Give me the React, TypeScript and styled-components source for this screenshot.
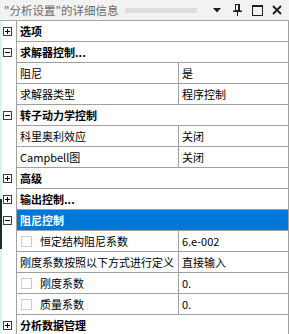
import React from "react";
import styled, { createGlobalStyle } from "styled-components";

const GlobalStyle = createGlobalStyle`
  html, body { margin: 0; padding: 0; background: #ffffff; }
  body { font-family: "Noto Sans CJK SC", "Noto Sans", sans-serif; font-size: 11px; color: #000; }
`;

const Panel = styled.div`
  width: 289px;
  height: 334px;
  overflow: hidden;
  display: flex;
  flex-direction: column;
  background: #ffffff;
`;

const TitleBar = styled.div`
  height: 20px;
  flex: none;
  display: flex;
  align-items: center;
  padding: 0 6px 0 4px;
  background: #f2f2f2;
  border-bottom: 1px solid #a8a8a8;
  gap: 5px;
`;

const Title = styled.span`
  color: #6a6a6a;
  font-size: 11.5px;
  white-space: nowrap;
  line-height: 20px;
`;

const Grip = styled.div`
  flex: 1;
  height: 5px;
  margin: 0 6px 0 2px;
  background-image: radial-gradient(circle, #c4c4c4 0.6px, transparent 0.8px);
  background-size: 2px 2px;
`;

const IconButton = styled.span`
  display: flex;
  align-items: center;
  justify-content: center;
  width: 12px;
  height: 14px;
  margin-left: 3px;
`;

const Body = styled.div`
  flex: 1;
  display: flex;
  min-height: 0;
`;

const EdgeStrip = styled.div`
  width: 2px;
  flex: none;
  background: linear-gradient(
    to bottom,
    #d6f6f0 0px,
    #d6f6f0 178px,
    #1f2a2a 178px,
    #1f2a2a 228px,
    #d6f6f0 228px
  );
`;

const Rows = styled.div`
  flex: 1;
  display: flex;
  flex-direction: column;
`;

const Row = styled.div`
  display: flex;
  height: 21px;
  flex: none;
`;

const Gutter = styled.div`
  width: 14px;
  flex: none;
  display: flex;
  align-items: center;
  padding-left: 1px;
  box-sizing: border-box;
`;

const Expander = styled.span`
  width: 9px;
  height: 9px;
  box-sizing: border-box;
  border: 1px solid #3c3c3c;
  display: flex;
  align-items: center;
  justify-content: center;
  background: #fff;
`;

const Content = styled.div<{ $selected?: boolean }>`
  flex: 1;
  display: flex;
  border-left: 1px solid #a0a0a0;
  border-right: 1px solid #a0a0a0;
  border-bottom: 1px solid #a0a0a0;
  background: ${(p) => (p.$selected ? "#0078d7" : "#ffffff")};
  color: ${(p) => (p.$selected ? "#ffffff" : "#000000")};
`;

const GroupLabel = styled.div`
  flex: 1;
  padding-left: 3px;
  font-weight: bold;
  line-height: 20px;
  white-space: nowrap;
`;

const NameCell = styled.div`
  width: 161px;
  flex: none;
  display: flex;
  align-items: center;
  padding-left: 3px;
  box-sizing: border-box;
  white-space: nowrap;
  overflow: hidden;
  line-height: 20px;
`;

const ValueCell = styled.div`
  flex: 1;
  border-left: 1px solid #a0a0a0;
  padding-left: 3px;
  line-height: 20px;
  white-space: nowrap;
`;

const Check = styled.span`
  width: 11px;
  height: 11px;
  box-sizing: border-box;
  border: 1px solid #cccccc;
  background: #fff;
  margin-left: 1px;
  margin-right: 8px;
  flex: none;
`;

const Sign = ({ open }: { open: boolean }) => (
  <svg width="5" height="5" viewBox="0 0 5 5">
    <rect x="0" y="2" width="5" height="1" fill="#000" />
    {!open && <rect x="2" y="0" width="1" height="5" fill="#000" />}
  </svg>
);

type Item =
  | { kind: "group"; label: string; open: boolean; selected?: boolean }
  | { kind: "prop"; label: string; value: string; check?: boolean };

const items: Item[] = [
  { kind: "group", label: "选项", open: false },
  { kind: "group", label: "求解器控制...", open: true },
  { kind: "prop", label: "阻尼", value: "是" },
  { kind: "prop", label: "求解器类型", value: "程序控制" },
  { kind: "group", label: "转子动力学控制", open: true },
  { kind: "prop", label: "科里奥利效应", value: "关闭" },
  { kind: "prop", label: "Campbell图", value: "关闭" },
  { kind: "group", label: "高级", open: false },
  { kind: "group", label: "输出控制...", open: false },
  { kind: "group", label: "阻尼控制", open: true, selected: true },
  { kind: "prop", label: "恒定结构阻尼系数", value: "6.e-002", check: true },
  { kind: "prop", label: "刚度系数按照以下方式进行定义", value: "直接输入" },
  { kind: "prop", label: "刚度系数", value: "0.", check: true },
  { kind: "prop", label: "质量系数", value: "0.", check: true },
  { kind: "group", label: "分析数据管理", open: false },
];

export default function App() {
  return (
    <>
      <GlobalStyle />
      <Panel>
        <TitleBar>
          <Title>"分析设置"的详细信息</Title>
          <Grip />
          <IconButton>
            <svg width="8" height="5" viewBox="0 0 8 5">
              <polygon points="0,0 8,0 4,4.5" fill="#1e1e1e" />
            </svg>
          </IconButton>
          <IconButton>
            <svg width="9" height="12" viewBox="0 0 9 12">
              <rect x="2.5" y="0.5" width="4" height="6" fill="none" stroke="#1e1e1e" />
              <rect x="5" y="1" width="1.5" height="5.5" fill="#1e1e1e" />
              <rect x="0" y="6.5" width="9" height="1.5" fill="#1e1e1e" />
              <rect x="4" y="8" width="1" height="4" fill="#1e1e1e" />
            </svg>
          </IconButton>
          <IconButton>
            <svg width="11" height="11" viewBox="0 0 11 11">
              <rect x="0.5" y="0.5" width="10" height="10" fill="none" stroke="#1e1e1e" />
              <rect x="0" y="0" width="11" height="2" fill="#1e1e1e" />
            </svg>
          </IconButton>
          <IconButton>
            <svg width="10" height="10" viewBox="0 0 10 10">
              <path d="M1 1 L9 9 M9 1 L1 9" stroke="#1e1e1e" strokeWidth="1.8" />
            </svg>
          </IconButton>
        </TitleBar>
        <Body>
          <EdgeStrip />
          <Rows>
            {items.map((it, i) => (
              <Row key={i}>
                <Gutter>
                  {it.kind === "group" && (
                    <Expander>
                      <Sign open={it.open} />
                    </Expander>
                  )}
                </Gutter>
                {it.kind === "group" ? (
                  <Content $selected={it.selected}>
                    <GroupLabel>{it.label}</GroupLabel>
                  </Content>
                ) : (
                  <Content>
                    <NameCell>
                      {it.check && <Check />}
                      {it.label}
                    </NameCell>
                    <ValueCell>{it.value}</ValueCell>
                  </Content>
                )}
              </Row>
            ))}
          </Rows>
        </Body>
      </Panel>
    </>
  );
}
